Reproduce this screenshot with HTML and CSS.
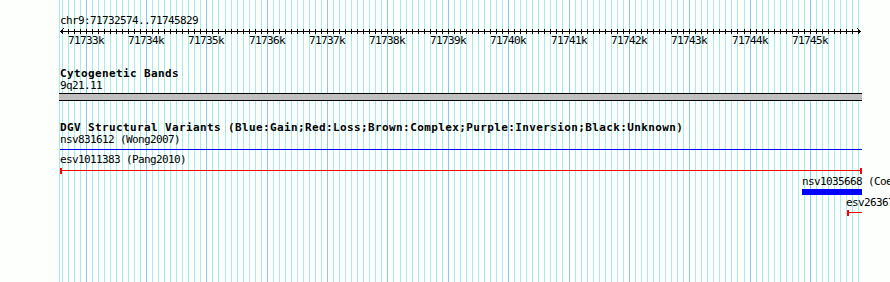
FILE: index.html
```html
<!DOCTYPE html>
<html>
<head>
<meta charset="utf-8">
<title>chr9:71732574..71745829</title>
<link rel="stylesheet" href="styles.css">
</head>
<body>
<div class="browser">
  <svg class="grid" width="890" height="282" viewBox="0 0 890 282" shape-rendering="crispEdges" aria-hidden="true">
    <path class="grid-minor" d="M59.5 0V282M62.5 0V282M68.5 0V282M74.5 0V282M80.5 0V282M92.5 0V282M98.5 0V282M104.5 0V282M110.5 0V282M116.5 0V282M122.5 0V282M128.5 0V282M134.5 0V282M140.5 0V282M152.5 0V282M158.5 0V282M164.5 0V282M170.5 0V282M176.5 0V282M182.5 0V282M188.5 0V282M194.5 0V282M200.5 0V282M212.5 0V282M218.5 0V282M225.5 0V282M231.5 0V282M237.5 0V282M243.5 0V282M249.5 0V282M255.5 0V282M261.5 0V282M273.5 0V282M279.5 0V282M285.5 0V282M291.5 0V282M297.5 0V282M303.5 0V282M309.5 0V282M315.5 0V282M321.5 0V282M333.5 0V282M339.5 0V282M345.5 0V282M351.5 0V282M357.5 0V282M363.5 0V282M369.5 0V282M375.5 0V282M381.5 0V282M393.5 0V282M400.5 0V282M406.5 0V282M412.5 0V282M418.5 0V282M424.5 0V282M430.5 0V282M436.5 0V282M442.5 0V282M454.5 0V282M460.5 0V282M466.5 0V282M472.5 0V282M478.5 0V282M484.5 0V282M490.5 0V282M496.5 0V282M502.5 0V282M514.5 0V282M520.5 0V282M526.5 0V282M532.5 0V282M538.5 0V282M544.5 0V282M550.5 0V282M556.5 0V282M562.5 0V282M575.5 0V282M581.5 0V282M587.5 0V282M593.5 0V282M599.5 0V282M605.5 0V282M611.5 0V282M617.5 0V282M623.5 0V282M635.5 0V282M641.5 0V282M647.5 0V282M653.5 0V282M659.5 0V282M665.5 0V282M671.5 0V282M677.5 0V282M683.5 0V282M695.5 0V282M701.5 0V282M707.5 0V282M713.5 0V282M719.5 0V282M725.5 0V282M731.5 0V282M737.5 0V282M744.5 0V282M756.5 0V282M762.5 0V282M768.5 0V282M774.5 0V282M780.5 0V282M786.5 0V282M792.5 0V282M798.5 0V282M804.5 0V282M816.5 0V282M822.5 0V282M828.5 0V282M834.5 0V282M840.5 0V282M846.5 0V282M852.5 0V282M858.5 0V282"/>
    <path class="grid-major" d="M86.5 0V282M146.5 0V282M206.5 0V282M267.5 0V282M327.5 0V282M387.5 0V282M448.5 0V282M508.5 0V282M569.5 0V282M629.5 0V282M689.5 0V282M750.5 0V282M810.5 0V282"/>
  </svg>

  <div class="tracks">
    <section class="track track-ruler">
      <div class="label">chr9:71732574..71745829</div>
      <svg class="ruler" width="890" height="20" viewBox="0 0 890 20" shape-rendering="crispEdges">
        <path class="ruler-line" d="M60 4.5H861"/>
        <path class="ruler-line" d="M63.5 1.5L60.5 4.5L63.5 7.5M857.5 1.5L860.5 4.5L857.5 7.5"/>
        <path class="ruler-line" d="M62.5 2V7M68.5 2V7M74.5 2V7M80.5 2V7M86.5 2V7M92.5 2V7M98.5 2V7M104.5 2V7M110.5 2V7M116.5 2V7M122.5 2V7M128.5 2V7M134.5 2V7M140.5 2V7M146.5 2V7M152.5 2V7M158.5 2V7M164.5 2V7M170.5 2V7M176.5 2V7M182.5 2V7M188.5 2V7M194.5 2V7M200.5 2V7M206.5 2V7M212.5 2V7M218.5 2V7M225.5 2V7M231.5 2V7M237.5 2V7M243.5 2V7M249.5 2V7M255.5 2V7M261.5 2V7M267.5 2V7M273.5 2V7M279.5 2V7M285.5 2V7M291.5 2V7M297.5 2V7M303.5 2V7M309.5 2V7M315.5 2V7M321.5 2V7M327.5 2V7M333.5 2V7M339.5 2V7M345.5 2V7M351.5 2V7M357.5 2V7M363.5 2V7M369.5 2V7M375.5 2V7M381.5 2V7M387.5 2V7M393.5 2V7M400.5 2V7M406.5 2V7M412.5 2V7M418.5 2V7M424.5 2V7M430.5 2V7M436.5 2V7M442.5 2V7M448.5 2V7M454.5 2V7M460.5 2V7M466.5 2V7M472.5 2V7M478.5 2V7M484.5 2V7M490.5 2V7M496.5 2V7M502.5 2V7M508.5 2V7M514.5 2V7M520.5 2V7M526.5 2V7M532.5 2V7M538.5 2V7M544.5 2V7M550.5 2V7M556.5 2V7M562.5 2V7M569.5 2V7M575.5 2V7M581.5 2V7M587.5 2V7M593.5 2V7M599.5 2V7M605.5 2V7M611.5 2V7M617.5 2V7M623.5 2V7M629.5 2V7M635.5 2V7M641.5 2V7M647.5 2V7M653.5 2V7M659.5 2V7M665.5 2V7M671.5 2V7M677.5 2V7M683.5 2V7M689.5 2V7M695.5 2V7M701.5 2V7M707.5 2V7M713.5 2V7M719.5 2V7M725.5 2V7M731.5 2V7M737.5 2V7M744.5 2V7M750.5 2V7M756.5 2V7M762.5 2V7M768.5 2V7M774.5 2V7M780.5 2V7M786.5 2V7M792.5 2V7M798.5 2V7M804.5 2V7M810.5 2V7M816.5 2V7M822.5 2V7M828.5 2V7M834.5 2V7M840.5 2V7M846.5 2V7M852.5 2V7M858.5 2V7"/>
        <g class="tick-labels">
          <text x="86" y="17">71733k</text>
          <text x="146" y="17">71734k</text>
          <text x="206" y="17">71735k</text>
          <text x="267" y="17">71736k</text>
          <text x="327" y="17">71737k</text>
          <text x="387" y="17">71738k</text>
          <text x="448" y="17">71739k</text>
          <text x="508" y="17">71740k</text>
          <text x="569" y="17">71741k</text>
          <text x="629" y="17">71742k</text>
          <text x="689" y="17">71743k</text>
          <text x="750" y="17">71744k</text>
          <text x="810" y="17">71745k</text>
        </g>
      </svg>
    </section>

    <section class="track track-bands">
      <h2 class="track-title">Cytogenetic Bands</h2>
      <div class="label">9q21.11</div>
      <div class="band"></div>
    </section>

    <section class="track track-dgv">
      <h2 class="track-title">DGV Structural Variants (Blue:Gain;Red:Loss;Brown:Complex;Purple:Inversion;Black:Unknown)</h2>
      <div class="label">nsv831612 (Wong2007)</div>
      <div class="gain-line"></div>
      <div class="label label-gap">esv1011383 (Pang2010)</div>
      <div class="loss">
        <span class="cap"></span><span class="loss-line"></span><span class="cap"></span>
      </div>
      <div class="label label-gap-sm" style="margin-left: 802px">nsv1035668 (Coe2014)</div>
      <div class="gain-box" style="margin-left: 802px; width: 60px"></div>
      <div class="label label-gap-sm" style="margin-left: 846px">esv2636739 (Coe2014)</div>
      <div class="loss loss-open" style="margin-left: 847px; width: 15px">
        <span class="cap"></span><span class="loss-line"></span>
      </div>
    </section>
  </div>
</div>
</body>
</html>
```

FILE: styles.css
```css
html, body {
  margin: 0;
  padding: 0;
  background: #fcfffc;
}

.browser {
  position: relative;
  width: 890px;
  height: 282px;
  overflow: hidden;
  background: #fcfffc;
  font-family: "DejaVu Sans Mono", monospace;
  color: #000;
}

.grid {
  position: absolute;
  top: 0;
  left: 0;
  display: block;
}

.grid-minor {
  stroke: #a6ecec;
  stroke-width: 1;
  fill: none;
}

.grid-major {
  stroke: #88c8ee;
  stroke-width: 1;
  fill: none;
}

.tracks {
  position: relative;
  padding-top: 15px;
}

.track {
  margin: 0;
}

.label {
  margin: 0 0 0 60px;
  font-size: 11px;
  line-height: 12px;
  height: 12px;
  letter-spacing: -0.62px;
  white-space: nowrap;
}

.track-title {
  margin: 0 0 0 60px;
  font-size: 11px;
  font-weight: bold;
  line-height: 12px;
  height: 12px;
  letter-spacing: 0.38px;
  white-space: nowrap;
}

.ruler {
  display: block;
}

.ruler-line {
  stroke: #000;
  stroke-width: 1;
  fill: none;
}

.tick-labels text {
  font-family: "DejaVu Sans Mono", monospace;
  font-size: 11px;
  letter-spacing: -0.62px;
  text-anchor: middle;
  fill: #000;
}

.track-bands {
  margin-top: 21px;
}

.band {
  margin: 1px 0 0 59px;
  width: 803px;
  height: 6px;
  background: #c0c0c0;
  border-top: 1px solid #000;
  border-bottom: 1px solid #000;
}

.track-dgv {
  margin-top: 21px;
}

.gain-line {
  margin: 3px 0 0 60px;
  width: 802px;
  height: 1px;
  background: #0000ff;
}

.label-gap {
  margin-top: 4px;
}

.label-gap-sm {
  margin-top: 2px;
}

.loss {
  display: flex;
  align-items: flex-start;
  margin: 2px 0 0 60px;
  width: 802px;
  height: 6px;
}

.loss-open {
  margin-top: 1px;
}

.cap {
  flex: 0 0 2px;
  height: 6px;
  background: #ff0000;
}

.loss-line {
  flex: 1 1 auto;
  height: 1px;
  margin-top: 2px;
  background: #ff0000;
}

.gain-box {
  margin-top: 1px;
  height: 6px;
  background: #0000ff;
}
```
